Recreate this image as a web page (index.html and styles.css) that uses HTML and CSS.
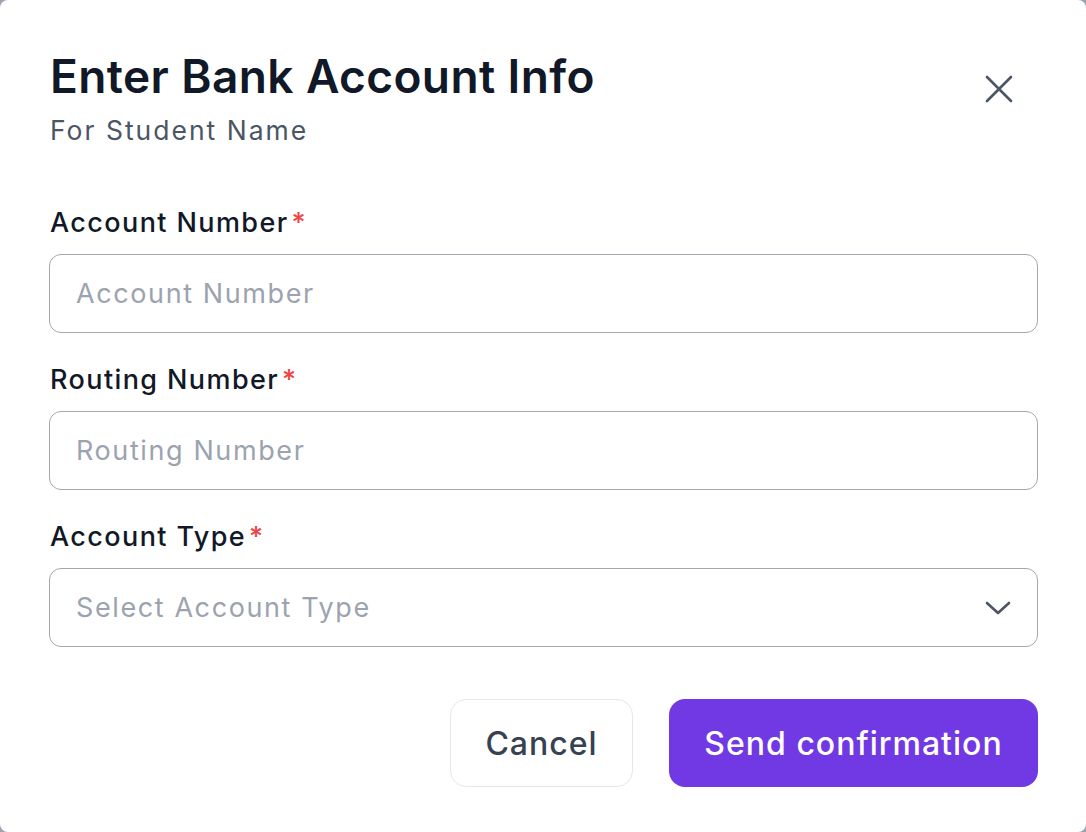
FILE: index.html
```html
<!DOCTYPE html>
<html lang="en">
<head>
<meta charset="utf-8">
<title>Enter Bank Account Info</title>
<link rel="stylesheet" href="styles.css">
</head>
<body>
<div class="modal">
  <div class="header">
    <div class="heading">
      <h1 class="title">Enter Bank Account Info</h1>
      <p class="subtitle">For Student Name</p>
    </div>
    <button class="close" aria-label="Close">
      <svg width="30" height="30" viewBox="0 0 30 30" fill="none" stroke="#4b5563" stroke-width="2.6" stroke-linecap="round">
        <path d="M3 3 L27 27 M27 3 L3 27"/>
      </svg>
    </button>
  </div>
  <form class="form">
    <div class="field">
      <label class="label">Account Number<span class="req">*</span></label>
      <input class="input" type="text" placeholder="Account Number">
    </div>
    <div class="field">
      <label class="label">Routing Number<span class="req">*</span></label>
      <input class="input" type="text" placeholder="Routing Number">
    </div>
    <div class="field">
      <label class="label">Account Type<span class="req">*</span></label>
      <div class="select">
        <span class="select-text">Select Account Type</span>
        <svg class="chevron" width="28" height="16" viewBox="0 0 28 16" fill="none" stroke="#4b5563" stroke-width="2.6" stroke-linecap="round" stroke-linejoin="round">
          <path d="M3 3 L14 13 L25 3"/>
        </svg>
      </div>
    </div>
    <div class="actions">
      <button type="button" class="btn btn-cancel">Cancel</button>
      <button type="button" class="btn btn-primary">Send confirmation</button>
    </div>
  </form>
</div>
</body>
</html>
```
FILE: styles.css
```css
html, body {
  margin: 0;
  padding: 0;
  background: #9ca3af;
}
.modal {
  width: 1086px;
  height: 832px;
  box-sizing: border-box;
  background: #ffffff;
  border-radius: 8px;
  padding: 48px 48px 0 49px;
  font-family: "Inter", "Liberation Sans", sans-serif;
  color: #111827;
}
.header {
  display: flex;
  justify-content: space-between;
  align-items: flex-start;
}
.title {
  margin: 0 0 0 1px;
  font-size: 46px;
  line-height: 56px;
  font-weight: 600;
  color: #111827;
  letter-spacing: 0.4px;
}
.subtitle {
  margin: 8px 0 0 1px;
  font-size: 26.5px;
  line-height: 36px;
  color: #4b5563;
  letter-spacing: 2px;
}
.close {
  margin-top: 26px;
  margin-right: 24px;
  padding: 0;
  border: 0;
  background: none;
  width: 30px;
  height: 30px;
}
.form {
  margin-top: 59px;
  display: flex;
  flex-direction: column;
  gap: 31px;
}
.field {
  display: flex;
  flex-direction: column;
  gap: 15px;
}
.label {
  margin-left: 1px;
  font-size: 27px;
  line-height: 32px;
  font-weight: 500;
  color: #111827;
  letter-spacing: 1.4px;
}
.req {
  color: #ef4444;
  margin-left: 3px;
}
.input, .select {
  box-sizing: border-box;
  width: 989px;
  height: 79px;
  border: 1.5px solid #a3a8b0;
  border-radius: 12px;
  padding: 0 26px;
  font-family: inherit;
  font-size: 27px;
  letter-spacing: 1.6px;
  color: #111827;
  background: #fff;
  outline: none;
}
.input::placeholder {
  color: #9ca3af;
}
.select {
  display: flex;
  align-items: center;
  justify-content: space-between;
}
.select-text {
  color: #9ca3af;
}
.chevron {
  margin-right: -1px;
}
.actions {
  display: flex;
  justify-content: flex-end;
  gap: 36px;
  margin-top: 21px;
}
.btn {
  height: 88px;
  border-radius: 16px;
  font-family: inherit;
  font-size: 32px;
  font-weight: 500;
  letter-spacing: 1px;
  padding: 0;
}
.btn-cancel {
  width: 183px;
  background: #ffffff;
  border: 1.5px solid #e5e7eb;
  color: #374151;
}
.btn-primary {
  width: 369px;
  background: #7139e3;
  border: 0;
  color: #ffffff;
}
```
